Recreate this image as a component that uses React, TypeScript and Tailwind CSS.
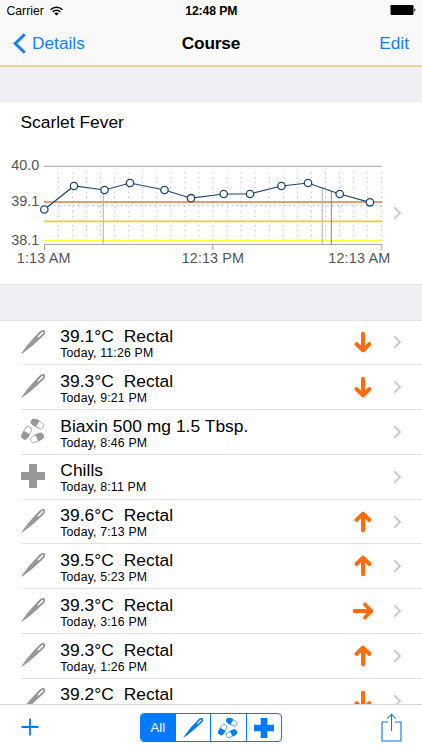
type IconKind = "needle" | "pills" | "cross"
type Trend = "up" | "down" | "flat"

interface Entry {
  icon: IconKind
  title: string
  time?: string
  trend?: Trend
}

const entries: Entry[] = [
  { icon: "needle", title: "39.1°C  Rectal", time: "Today, 11:26 PM", trend: "down" },
  { icon: "needle", title: "39.3°C  Rectal", time: "Today, 9:21 PM", trend: "down" },
  { icon: "pills", title: "Biaxin 500 mg 1.5 Tbsp.", time: "Today, 8:46 PM" },
  { icon: "cross", title: "Chills", time: "Today, 8:11 PM" },
  { icon: "needle", title: "39.6°C  Rectal", time: "Today, 7:13 PM", trend: "up" },
  { icon: "needle", title: "39.5°C  Rectal", time: "Today, 5:23 PM", trend: "up" },
  { icon: "needle", title: "39.3°C  Rectal", time: "Today, 3:16 PM", trend: "flat" },
  { icon: "needle", title: "39.3°C  Rectal", time: "Today, 1:26 PM", trend: "up" },
  { icon: "needle", title: "39.2°C  Rectal", trend: "down" },
]

const points = [
  [44.3, 59.5], [74, 36], [104.5, 40], [130, 33], [164.5, 40], [191, 48.2],
  [223.7, 44], [250, 44], [281.5, 36], [308, 33], [339.7, 44], [370, 52.3],
]

const gridLines = Array.from({ length: 24 }, (_, i) => 44.3 + (i + 1) * 14.06)

function Icon({ kind, className }: { kind: IconKind; className: string }) {
  if (kind === "cross") {
    return (
      <svg className={className} viewBox="0 0 24 24" fill="currentColor">
        <path d="M8 0h8v8h8v8h-8v8H8v-8H0V8h8z" />
      </svg>
    )
  }
  if (kind === "needle") {
    return (
      <svg className={className} viewBox="0 0 24 24">
        <path d="M0 24C3.6 18.2 9 11.4 18.4 1.8C20.4-.2 22.8-.4 23.8.6C24.8 1.6 24.2 3.8 22.6 5.4C13 14.8 6 20.4 0 24Z" fill="currentColor" />
        <path d="M17.4 6.8L21.6 2.6" stroke="#fff" strokeWidth="1.5" strokeLinecap="round" />
      </svg>
    )
  }
  return (
    <svg className={className} viewBox="0 0 24 24" fill="none" stroke="currentColor" strokeWidth=".7">
      <g transform="translate(16.4 4.8) rotate(30)">
        <rect x="-6.8" y="-3.2" width="13.6" height="6.4" rx="3.2" />
        <path d="M0-3.2h-3.6a3.2 3.2 0 0 0 0 6.4H0z" fill="currentColor" />
      </g>
      <g transform="translate(5.6 13.8) rotate(-62)">
        <rect x="-6.8" y="-3.2" width="13.6" height="6.4" rx="3.2" />
        <path d="M0-3.2h-3.6a3.2 3.2 0 0 0 0 6.4H0z" fill="currentColor" />
      </g>
      <g transform="translate(16.1 18.8) rotate(155)">
        <rect x="-6.8" y="-3.2" width="13.6" height="6.4" rx="3.2" />
        <path d="M0-3.2h-3.6a3.2 3.2 0 0 0 0 6.4H0z" fill="currentColor" />
      </g>
    </svg>
  )
}

function TrendArrow({ trend }: { trend: Trend }) {
  const turn = { up: "rotate(180 12 12)", down: "", flat: "rotate(-90 12 12)" }[trend]
  return (
    <svg
      className="h-6 w-6 shrink-0"
      viewBox="0 0 24 24"
      fill="none"
      stroke="#ff6a0a"
      strokeWidth="3.9"
      strokeLinecap="round"
      strokeLinejoin="round"
    >
      <path transform={turn} d="M12 3.6V20.4M5.5 14L12 20.4L18.5 14" />
    </svg>
  )
}

function Chevron() {
  return (
    <svg className="h-[14px] w-[9px] shrink-0" viewBox="0 0 9 14" fill="none" stroke="#c7c7cc" strokeWidth="1.8">
      <path d="M1.2 1.2L7 7L1.2 12.8" />
    </svg>
  )
}

function Chart() {
  return (
    <svg className="h-[134px] w-[390px] shrink-0" viewBox="0 0 390 134" fill="none">
      <g stroke="#b4b4b4" strokeWidth="1" strokeDasharray="1.2 3.6">
        {gridLines.map((x) => (
          <path key={x} d={`M${x} 22.5V94`} />
        ))}
        <path d="M44.3 55.5H382" />
      </g>
      <path d="M44 16.3H382" stroke="#a3a3a3" />
      <path d="M44.5 100V94.5H381.8V100M212.8 94.5V100" stroke="#a3a3a3" />
      <path d="M44 52H382" stroke="#e07c43" strokeWidth="1.7" />
      <path d="M44 71.3H382" stroke="#fcc81d" strokeWidth="1.7" />
      <path d="M44 90.5H382" stroke="#fdfb32" strokeWidth="1.7" />
      <path d="M103.3 40V94.5M322.2 38V94.5" stroke="#b2b2b2" />
      <path d="M331.3 41V94.5" stroke="#858585" />
      <polyline points={points.map((p) => p.join(",")).join(" ")} stroke="#1f4575" strokeWidth="1.2" />
      {points.map(([x, y]) => (
        <circle key={x} cx={x} cy={y} r="3.7" fill="#fff" stroke="#1f4575" strokeWidth="1.3" />
      ))}
      <g fill="#555" fontSize="14.4">
        <text x="11.3" y="20.3">40.0</text>
        <text x="11.3" y="56">39.1</text>
        <text x="11.3" y="94.5">38.1</text>
        <text x="16.8" y="112.5" letterSpacing=".15">1:13 AM</text>
        <text x="181.7" y="112.5" letterSpacing=".1">12:13 PM</text>
        <text x="328.3" y="112.5" letterSpacing=".15">12:13 AM</text>
      </g>
    </svg>
  )
}

export default function App() {
  return (
    <main className="flex h-[750px] w-[422px] flex-col overflow-hidden bg-white font-['Liberation_Sans',Arial,sans-serif] text-black">
      <header className="h-[67px] shrink-0 border-b-2 border-[#e9d48f] bg-[#f9f9f9]">
        <div className="grid h-[21px] grid-cols-3 items-center pt-[2px] pr-[6px] pl-[6.5px] text-[12.2px]">
          <div className="flex items-center gap-[6px]">
            <span>Carrier</span>
            <svg className="h-[10px] w-[13px]" viewBox="0 0 13 10" fill="none" stroke="#000" strokeWidth="1.5">
              <path d="M.6 3.7C3.9.3 9.1.3 12.4 3.7" />
              <path d="M2.7 5.9C4.8 3.8 8.2 3.8 10.3 5.9" />
              <path d="M6.5 9.6L4.3 7.4C5.5 6.3 7.5 6.3 8.7 7.4Z" fill="#000" stroke="none" />
            </svg>
          </div>
          <span className="text-center font-bold tracking-[-0.1px]">12:48 PM</span>
          <svg className="-mt-[3px] h-[10px] w-[26px] justify-self-end" viewBox="0 0 26 10">
            <rect x=".5" width="23" height="10" rx="1.2" />
            <path d="M24.3 3.3C25.8 3.9 25.8 6.1 24.3 6.7z" />
          </svg>
        </div>
        <div className="grid h-[45px] grid-cols-3 items-center pr-[13px] pl-[13px] text-[17.3px]">
          <div className="flex items-center gap-[6px] text-[#157efb]">
            <svg className="h-[21px] w-[13px]" viewBox="0 0 13 21" fill="none" stroke="currentColor" strokeWidth="3">
              <path d="M11.8 1.2L2.3 10.5L11.8 19.8" />
            </svg>
            <span>Details</span>
          </div>
          <h1 className="text-center font-bold tracking-[-0.2px]">Course</h1>
          <span className="text-right text-[#157efb]">Edit</span>
        </div>
      </header>

      <div className="h-[35px] shrink-0 border-b border-[#e9e9ee] bg-[#efeff4]" />

      <section className="h-[182px] shrink-0">
        <h2 className="h-12 pt-[10px] pl-[20.5px] text-[17.4px] leading-5">Scarlet Fever</h2>
        <div className="flex">
          <Chart />
          <div className="flex h-[125px] items-center pl-[3px]">
            <Chevron />
          </div>
        </div>
      </section>

      <div className="h-[36.5px] shrink-0 border-y border-[#e4e4e9] bg-[#efeff4]" />

      <ul className="min-h-0 flex-1 overflow-hidden">
        {entries.map((entry, i) => (
          <li key={i} className="h-[44.8px] pl-[21px]">
            <div className="flex h-full border-b border-[#e2e2e5] pr-[20px]">
              <Icon kind={entry.icon} className="mt-[9px] h-6 w-6 shrink-0 text-[#989898]" />
              <div className="flex-1 pt-[5.5px] pl-[15.3px]">
                <p className="text-[17.4px] leading-5 tracking-[0.04px] whitespace-pre">{entry.title}</p>
                {entry.time && <p className="text-[12.3px] leading-[15px] tracking-[0.17px]">{entry.time}</p>}
              </div>
              <div className="flex items-center gap-[18.5px]">
                {entry.trend && <TrendArrow trend={entry.trend} />}
                <Chevron />
              </div>
            </div>
          </li>
        ))}
      </ul>

      <footer className="flex h-[46px] shrink-0 items-center justify-between border-t border-[#d5d5d8] pr-[20px] pl-[20.5px] text-[#007aff]">
        <svg className="mb-px h-[18px] w-[18px]" viewBox="0 0 18 18" fill="none" stroke="currentColor" strokeWidth="1.8">
          <path d="M9 .5V17.5M.5 9H17.5" />
        </svg>
        <div className="ml-[2px] flex h-[29.5px] w-[142px] divide-x divide-[#007aff] overflow-hidden rounded-[4px] border border-[#007aff]">
          <div className="flex flex-1 items-center justify-center bg-[#007aff] text-[13.2px] text-white">All</div>
          <div className="flex flex-1 items-center justify-center">
            <Icon kind="needle" className="h-5 w-5" />
          </div>
          <div className="flex flex-1 items-center justify-center">
            <Icon kind="pills" className="h-5 w-5" />
          </div>
          <div className="flex flex-1 items-center justify-center">
            <Icon kind="cross" className="h-5 w-5" />
          </div>
        </div>
        <svg className="h-[29px] w-[21px]" viewBox="0 0 21 29" fill="none" stroke="currentColor" strokeWidth="1.1">
          <path d="M7 9H1V28H20V9H14" />
          <path d="M10.5 18V1.2M6.2 5.6L10.5 1.2L14.8 5.6" />
        </svg>
      </footer>
    </main>
  )
}
